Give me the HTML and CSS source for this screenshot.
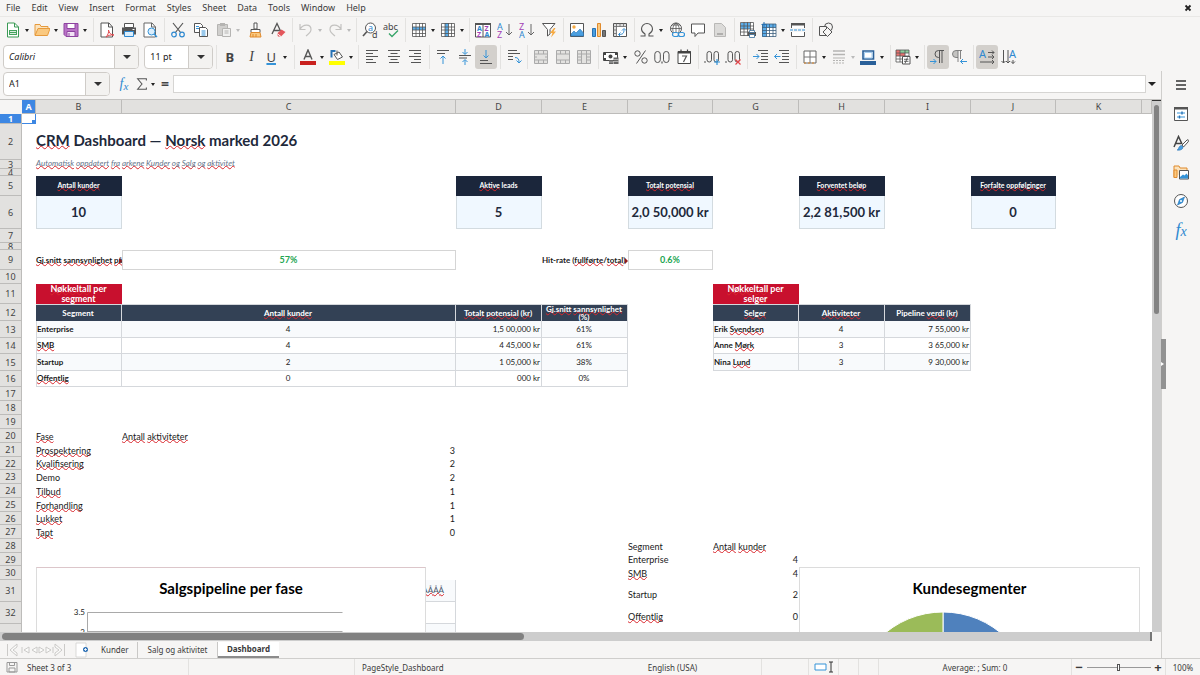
FILE: index.html
```html
<!DOCTYPE html>
<html lang="en">
<head>
<meta charset="utf-8">
<title>CRM Dashboard</title>
<link rel="stylesheet" href="styles.css">
</head>
<body>
<svg class="defs" aria-hidden="true">
  <symbol id="new" viewBox="0 0 16 16"><path d="M2.5 1h7l4 4v10h-11z" fill="#fff" stroke="#3a9a55"/><path d="M9.500 1v4h4" fill="none" stroke="#3a9a55"/><path d="M4 8h8v5H4z" fill="#43a35c"/><path d="M5 9.500h6M5 11.500h6" stroke="#fff" stroke-width=".8"/></symbol>
  <symbol id="open" viewBox="0 0 16 16"><path d="M1 13V2.500h5l1 2h7v3" fill="#fbe3bd" stroke="#e69a3c"/><path d="M1 13.500L4 6.500h12l-2.500 7z" fill="#fac980" stroke="#e69a3c"/></symbol>
  <symbol id="save" viewBox="0 0 16 16"><path d="M1 1.500h14v13H3l-2-2z" fill="#b973c6" stroke="#8e44a0"/><path d="M4 1.500h8v5H4z" fill="#fff" stroke="#8e44a0"/><path d="M4 9.500h8v5H4z" fill="#f3e3f6" stroke="#8e44a0"/><path d="M6 11v3" stroke="#8e44a0"/></symbol>
  <symbol id="pdf" viewBox="0 0 16 16"><path d="M2 1h8l3.500 4v10H2z" fill="#fff" stroke="#555"/><path d="M9.500 1v4h4" fill="none" stroke="#555"/><path d="M7 15c2-2 3-5 2.500-7 .5 3 2.500 5 5.500 5-3-.5-6 .5-8 2z" fill="none" stroke="#e0474c"/></symbol>
  <symbol id="print" viewBox="0 0 16 16"><path d="M3.500 1.500h9v4h-9z" fill="#fff" stroke="#555"/><path d="M1 5.500h14v7H1z" fill="#555"/><path d="M3.500 9.500h9v5h-9z" fill="#dbeefc" stroke="#2f89d0"/><path d="M11.500 7.500h2" stroke="#fff"/></symbol>
  <symbol id="preview" viewBox="0 0 16 16"><path d="M2 1h8l3.500 4v10H2z" fill="#fff" stroke="#666"/><path d="M9.500 1v4h4" fill="none" stroke="#666"/><circle cx="9.500" cy="9.500" r="3.500" fill="#dbeefc" stroke="#3493d8"/><path d="M12 12l3 3" stroke="#3493d8" stroke-width="1.400"/></symbol>
  <symbol id="cut" viewBox="0 0 16 16"><path d="M3 1l8 10M13 1L5 11" stroke="#555" stroke-width="1.200"/><circle cx="4" cy="12.500" r="2.300" fill="none" stroke="#2f89d0" stroke-width="1.200"/><circle cx="12" cy="12.500" r="2.300" fill="none" stroke="#2f89d0" stroke-width="1.200"/></symbol>
  <symbol id="copy" viewBox="0 0 16 16"><path d="M1.500 1.500h6l2 2v7h-8z" fill="#fff" stroke="#555"/><path d="M6.500 5.500h6l2 2v7h-8z" fill="#fff" stroke="#555"/><path d="M3 4.500h3M3 6.500h3M8.500 9h4M8.500 11h4M8.500 13h4" stroke="#3493d8"/></symbol>
  <symbol id="paste" viewBox="0 0 16 16"><path d="M1.500 2.500h10v11h-10z" fill="#d0cfcd" stroke="#b5b4b2"/><path d="M4 1h5v3H4z" fill="#b5b4b2"/><path d="M6.500 6.500h8v8h-8z" fill="#f1f1f0" stroke="#b5b4b2"/><path d="M8.500 9h4M8.500 11h4" stroke="#b5b4b2"/></symbol>
  <symbol id="clone" viewBox="0 0 16 16"><path d="M7 1h3v6H7z" fill="#fff" stroke="#555"/><path d="M4 7.500h9v3H4z" fill="#fff" stroke="#555"/><path d="M4 10.500h9l1 4.500H3z" fill="#fac980" stroke="#e08a2c"/><path d="M6 12v3M9 12v3" stroke="#e08a2c"/></symbol>
  <symbol id="clear" viewBox="0 0 16 16"><path d="M2 12L7 1.500 11 10M3.500 8.500h6" fill="none" stroke="#555" stroke-width="1.300"/><path d="M7 11.500l4.500-4 4 2.500-4.500 4.500H8z" fill="#e4575c"/><path d="M7 11.500l4 3" stroke="#fff"/></symbol>
  <symbol id="undo" viewBox="0 0 16 16"><path d="M2 2v5.500h5.500M2 7.500C5 1.500 13 2 13 7.500c0 3-2.500 4.500-5 6.500" fill="none" stroke="#c3c2c0" stroke-width="1.200"/></symbol>
  <symbol id="redo" viewBox="0 0 16 16"><path d="M14 2v5.500H8.500M14 7.500C11 1.500 3 2 3 7.500c0 3 2.500 4.500 5 6.500" fill="none" stroke="#c3c2c0" stroke-width="1.200"/></symbol>
  <symbol id="find" viewBox="0 0 16 16"><circle cx="8.500" cy="6" r="5" fill="#fff" stroke="#555"/><path d="M5 9.500L1 14" stroke="#555" stroke-width="1.600"/><text x="6" y="8.500" class="it blue">a</text><text x="10" y="15.500" class="it">d</text></symbol>
  <symbol id="spell" viewBox="0 0 16 16"><text x="0" y="7.500" class="it">abc</text><path d="M6 11.500l3 3 6-6" fill="none" stroke="#3aa66a" stroke-width="1.400"/></symbol>
  <symbol id="row" viewBox="0 0 16 16"><path d="M1.500 1.500h13v13h-13z" fill="#fff"/><path d="M1 5h14v3H1z" fill="#5badea"/><path d="M1.500 1.500h13v13h-13zM1 5h14M1 8h14M1 11.500h14M5 1v14M8.500 1v14M11.500 1v14" fill="none" stroke="#555" stroke-width=".8"/></symbol>
  <symbol id="col" viewBox="0 0 16 16"><path d="M1.500 1.500h13v13h-13z" fill="#fff"/><path d="M5 1h3.500v14H5z" fill="#5badea"/><path d="M1.500 1.500h13v13h-13zM1 5h14M1 8h14M1 11.500h14M5 1v14M8.500 1v14M11.500 1v14" fill="none" stroke="#555" stroke-width=".8"/></symbol>
  <symbol id="sort" viewBox="0 0 16 16"><path d="M.5 1.500h15v13.500H.5z" fill="#fff" stroke="#555"/><path d="M0 1h16v2H0z" fill="#555"/><path d="M8 2v13" stroke="#555"/><text x="2" y="9" class="is blue">A</text><text x="2" y="14.500" class="is violet">Z</text><text x="9.500" y="9" class="is violet">Z</text><text x="9.500" y="14.500" class="is blue">A</text></symbol>
  <symbol id="asc" viewBox="0 0 16 16"><text x="0" y="7.500" class="it blue">A</text><text x="0" y="15.500" class="it violet">Z</text><path d="M12 2v11M9 10l3 3 3-3" fill="none" stroke="#666"/></symbol>
  <symbol id="desc" viewBox="0 0 16 16"><text x="0" y="7.500" class="it violet">Z</text><text x="0" y="15.500" class="it blue">A</text><path d="M12 2v11M9 10l3 3 3-3" fill="none" stroke="#666"/></symbol>
  <symbol id="filter" viewBox="0 0 16 16"><path d="M1.500 1.500h12.500L9 7.500v4.500l-2.500 2V7.500z" fill="#fff" stroke="#555"/><path d="M13 6l-4 5h2.500L10 15.500l5-6h-2.500L14.500 6z" fill="#f7a93f"/></symbol>
  <symbol id="image" viewBox="0 0 16 16"><path d="M1.500 1.500h13v13h-13z" fill="#fff" stroke="#555"/><circle cx="5" cy="5" r="1.700" fill="#f7a93f"/><path d="M2 14v-2l3-3 2 2 4-4 3.500 4v3z" fill="#4b9fe0" stroke="#2772b5" stroke-width=".6"/></symbol>
  <symbol id="chart" viewBox="0 0 16 16"><path d="M1.500 6.500h3v8h-3z" fill="#4b9fe0" stroke="#2772b5"/><path d="M6.500 1.500h3v13h-3z" fill="#fac980" stroke="#e08a2c"/><path d="M11.500 8.500h3v6h-3z" fill="#777" stroke="#555"/></symbol>
  <symbol id="pivot" viewBox="0 0 16 16"><path d="M1.500 1.500h13v13h-13z" fill="#fff" stroke="#555"/><path d="M2 2h12v2.500H2zM2 2h2.500v12H2z" fill="#ddd"/><path d="M1 4.500h14M4.500 1v14M8 1v3.500M11.500 1v3.500M1 8h3.500M1 11.500h3.500" stroke="#666" stroke-width=".8"/><path d="M7 12.500c4 0 5-1.500 5-5M10 8.500l2-2 2 2M8.500 10.500l-2 2 2 2" fill="none" stroke="#2f89d0"/></symbol>
  <symbol id="omega" viewBox="0 0 16 16"><path d="M1.500 14h4.500v-2C3.500 10.500 2.500 9 2.500 7a5.500 5.500 0 0 1 11 0c0 2-1 3.500-3.500 5v2h4.500" fill="none" stroke="#555" stroke-width="1.100"/></symbol>
  <symbol id="link" viewBox="0 0 16 16"><circle cx="7" cy="6.500" r="5.500" fill="#fff" stroke="#555"/><path d="M1.500 6.500h11M7 1v11M3 3h8M4.500 11C3 7 4 3 7 1c3 2 4 6 2.500 10" fill="none" stroke="#555" stroke-width=".8"/><rect x="3.500" y="10.500" width="6" height="4" rx="2" fill="#f6f5f4" stroke="#3493d8" stroke-width="1.200"/><rect x="9.500" y="10.500" width="6" height="4" rx="2" fill="#f6f5f4" stroke="#3493d8" stroke-width="1.200"/></symbol>
  <symbol id="comment" viewBox="0 0 16 16"><path d="M1.500 2h13v9H8l-3 3.500V11H1.500z" fill="#fff" stroke="#555"/></symbol>
  <symbol id="footer" viewBox="0 0 16 16"><path d="M2.500 1.500h7l4 4v9h-11z" fill="#dcdbd9" stroke="#b9b8b6"/><path d="M5 11h6v2H5z" fill="#b0afad"/></symbol>
  <symbol id="area" viewBox="0 0 16 16"><path d="M.5 .5h13v13H.5z" fill="#fff"/><path d="M1 1h9v6H1z" fill="#5badea"/><path d="M.5 .5h13v13H.5zM0 4h14M0 7h14M0 10h14M4 0v14M7.500 0v14M10.500 0v14" fill="none" stroke="#555" stroke-width=".8"/><path d="M8 10h8v4H8z" fill="#555"/><path d="M9.500 8.500h5v2h-5zM9.500 12.500h5v3h-5z" fill="#fff" stroke="#3a6f9a" stroke-width=".8"/></symbol>
  <symbol id="freeze" viewBox="0 0 16 16"><path d="M3 2h12v12.500H3z" fill="#fff"/><path d="M1 2h14v3.500H1zM1 2h4.500v13H1z" fill="#5badea"/><path d="M1.500 2h13.500v12.500H1.500zM1 5.500h14M1 8.500h14M1 11.500h14M5.500 2v13M8.500 2v13M12 2v13" fill="none" stroke="#3d5f7d" stroke-width=".8"/><path d="M3 0v5M.5 2.500h5" stroke="#2772b5"/></symbol>
  <symbol id="split" viewBox="0 0 16 16"><path d="M1.500 6V1.500h13V6M1.500 10v4.500h13V10" fill="#fff" stroke="#555"/><path d="M1 1h14v2.500H1z" fill="#555"/><path d="M0 8h16" stroke="#3493d8" stroke-dasharray="3 1"/></symbol>
  <symbol id="shapes" viewBox="0 0 16 16"><circle cx="10.500" cy="5" r="4" fill="#f6f5f4" stroke="#555"/><path d="M1.500 4.500h7v9h-7z" fill="#f6f5f4" stroke="#555"/><path d="M9.500 5.500l4.500 4.500-4.500 4.500L5 10z" fill="#f6f5f4" stroke="#555"/></symbol>
  <symbol id="al" viewBox="0 0 16 16"><path d="M2 1.500h12M2 4.500h7M2 7.500h12M2 10.500h7M2 13.500h10" stroke="#555"/></symbol>
  <symbol id="ac" viewBox="0 0 16 16"><path d="M2 1.500h12M4.500 4.500h7M2 7.500h12M4.500 10.500h7M3 13.500h10" stroke="#555"/></symbol>
  <symbol id="ar" viewBox="0 0 16 16"><path d="M2 1.500h12M7 4.500h7M2 7.500h12M7 10.500h7M4 13.500h10" stroke="#555"/></symbol>
  <symbol id="vt" viewBox="0 0 16 16"><path d="M2 1.500h12M2 4.500h8" stroke="#555"/><path d="M8 15V7M5.500 9.500L8 7l2.500 2.500" fill="none" stroke="#3493d8"/></symbol>
  <symbol id="vm" viewBox="0 0 16 16"><path d="M2 6.500h12M2 9h8" stroke="#555"/><path d="M8 0v5M5.500 3L8 5.500 10.500 3M8 16v-5M5.500 13L8 10.500l2.500 2.500" fill="none" stroke="#3493d8"/></symbol>
  <symbol id="vb" viewBox="0 0 16 16"><path d="M2 11.500h8M2 14.500h12" stroke="#555"/><path d="M8 1v8M5.500 6.500L8 9l2.500-2.500" fill="none" stroke="#3493d8"/></symbol>
  <symbol id="wrap" viewBox="0 0 16 16"><path d="M2 1.500h9M2 4.500h12M2 7.500h5M2 10.500h5" stroke="#555"/><path d="M9 8.500c3 0 4 1.500 4 5M10.500 11.500l2.500 2.500 2.500-2.500" fill="none" stroke="#3493d8"/></symbol>
  <symbol id="m1" viewBox="0 0 16 16"><path d="M1.500 1.500h13v13h-13z" fill="#e3e2e0"/><path d="M1.500 1.500h13v13h-13zM1 5h14M1 11h14M5.500 1v4M10.500 1v4M5.500 11v4M10.500 11v4M1 8h3M12 8h3" fill="none" stroke="#aaa"/></symbol>
  <symbol id="m2" viewBox="0 0 16 16"><path d="M1.500 1.500h13v13h-13z" fill="#e3e2e0"/><path d="M1.500 1.500h13v13h-13zM1 5h14M1 11h14M5.500 1v4M10.500 1v4M5.500 11v4M10.500 11v4" fill="none" stroke="#aaa"/></symbol>
  <symbol id="m3" viewBox="0 0 16 16"><path d="M1.500 1.500h13v13h-13z" fill="#e3e2e0"/><path d="M1.500 1.500h13v13h-13zM1 5h14M1 11h4.500M10.500 11H15M5.500 1v14M10.500 1v14M1 8h4.500M10.500 8H15" fill="none" stroke="#aaa"/></symbol>
  <symbol id="money" viewBox="0 0 16 16"><path d="M.5 3.500h14v8H.5z" fill="#fff" stroke="#444"/><circle cx="7.500" cy="7.500" r="2" fill="#444"/><path d="M1 4h2v2H1zM12 4h2v2h-2zM1 9h2v2H1z" fill="#444"/><path d="M6 11h4v4H6zM10.500 8.500h5v6.500h-5z" fill="#666"/><path d="M6 13h4M10.500 10.500h5M10.500 12.500h5" stroke="#ddd" stroke-width=".6"/></symbol>
  <symbol id="pct" viewBox="0 0 16 16"><circle cx="4.500" cy="4.500" r="2.700" fill="none" stroke="#555"/><circle cx="11.500" cy="11.500" r="2.700" fill="none" stroke="#555"/><path d="M12.500 1.500L3.500 14.500" stroke="#555"/></symbol>
  <symbol id="num" viewBox="0 0 16 16"><rect x=".8" y="2.500" width="5.500" height="11" rx="2.700" fill="none" stroke="#555"/><rect x="9.500" y="2.500" width="5.500" height="11" rx="2.700" fill="none" stroke="#555"/><path d="M8 12.500v2" stroke="#555" stroke-width="1.200"/></symbol>
  <symbol id="date" viewBox="0 0 16 16"><path d="M2 2.500h12.500v12H2z" fill="#fff" stroke="#444"/><path d="M2 2h12.500v2.500H2z" fill="#444"/><path d="M5 .5v3M11.500 .5v3" stroke="#444" stroke-width="1.200"/><path d="M6 7h4.500L7.500 13" fill="none" stroke="#555" stroke-width="1.200"/></symbol>
  <symbol id="addd" viewBox="0 0 16 16"><path d="M1 12v2" stroke="#555"/><rect x="3" y="2.500" width="4.500" height="10.500" rx="2.200" fill="none" stroke="#555"/><rect x="10" y="2.500" width="4.500" height="10.500" rx="2.200" fill="none" stroke="#555"/><path d="M13 10v6M10 13h6" stroke="#3493d8" stroke-width="1.200"/></symbol>
  <symbol id="deld" viewBox="0 0 16 16"><path d="M1 12v2" stroke="#555"/><rect x="3" y="2.500" width="4.500" height="10.500" rx="2.200" fill="none" stroke="#555"/><rect x="10" y="2.500" width="4.500" height="10.500" rx="2.200" fill="none" stroke="#555"/><path d="M10.500 10.500l5 5M15.500 10.500l-5 5" stroke="#e4474c" stroke-width="1.200"/></symbol>
  <symbol id="ind" viewBox="0 0 16 16"><path d="M5 1.500h10M8 4.500h7M8 7.500h7M8 10.500h7M5 13.500h10" stroke="#555"/><path d="M0 7.500h6M3.500 5L6 7.500 3.500 10" fill="none" stroke="#3493d8"/></symbol>
  <symbol id="outd" viewBox="0 0 16 16"><path d="M5 1.500h10M8 4.500h7M8 7.500h7M8 10.500h7M5 13.500h10" stroke="#555"/><path d="M6.500 7.500h-6M3 5L.5 7.500 3 10" fill="none" stroke="#3493d8"/></symbol>
  <symbol id="bord" viewBox="0 0 16 16"><path d="M2 2h12v12H2z" fill="#fff" stroke="#666"/><path d="M8 2v12M2 8h12" stroke="#777"/><path d="M2 14h12" stroke="#e08a2c" stroke-dasharray="2 2"/></symbol>
  <symbol id="lines" viewBox="0 0 16 16"><path d="M2 2h12M2 5.500h12" stroke="#b5b4b2" stroke-width="1.600"/><path d="M2 9h12" stroke="#b5b4b2"/><path d="M2 11.500h12M2 14h12" stroke="#b5b4b2" stroke-dasharray="2 1"/></symbol>
  <symbol id="lcol" viewBox="0 0 16 16"><path d="M3 2h10.500v8H3z" fill="#fff" stroke="#2a6099" stroke-width="1.600"/><path d="M4.500 3.500h7.500v5.500H4.500z" fill="none" stroke="#8fc0ea" stroke-width=".8"/><path d="M0 12h16v4H0z" fill="#2a6099"/></symbol>
  <symbol id="cond" viewBox="0 0 16 16"><path d="M1 1h13v12H1z" fill="#fff"/><path d="M1 1h4v6H1z" fill="#e9726f"/><path d="M5 1h9v3H5z" fill="#8ccf9d"/><path d="M5 4h5v3H5z" fill="#e9726f"/><path d="M1 1h13v12H1zM1 4h13M1 7h13M1 10h13M5 1v12M10 1v12" fill="none" stroke="#555" stroke-width=".8"/><path d="M7.500 7.500h7.500v7.500H7.500z" fill="#fff" stroke="#555"/><path d="M9 10.300h4.500M9 12.300h4.500M12.500 8.500l-2.500 6" stroke="#444" stroke-width=".8"/></symbol>
  <symbol id="ltr" viewBox="0 0 16 16"><path d="M14 1.500H8.500a3.500 3.500 0 0 0 0 7h1M9.500 1.500V14M12 1.500V14" fill="none" stroke="#555"/><path d="M0 12.500h6M3.500 10L6 12.500 3.500 15" fill="none" stroke="#3493d8"/></symbol>
  <symbol id="rtl" viewBox="0 0 16 16"><path d="M7 1.500H5a3.500 3.500 0 0 0 0 7h2z" fill="#c4c3c1"/><path d="M11 1.500H5a3.500 3.500 0 0 0 0 7h2M7 1.500V13M9.500 1.500V10" fill="none" stroke="#777" stroke-width=".9"/><path d="M9.500 12.500H16M12 10l-2.500 2.500L12 15" fill="none" stroke="#3493d8"/></symbol>
  <symbol id="th" viewBox="0 0 16 16"><text x="0" y="9" class="ib blue">A</text><path d="M9 3.500h6M9 8h6M1 13h14M13 1.500l2 2-2 2M13 6l2 2-2 2M13 11l2 2-2 2" fill="none" stroke="#555"/></symbol>
  <symbol id="tv" viewBox="0 0 16 16"><text x="8" y="9" class="ib blue">A</text><path d="M2.500 1v13M7 1v13M12 11v3.500M.5 12l2 2 2-2M5 12l2 2 2-2M10 12.500l2 2 2-2" fill="none" stroke="#555"/></symbol>
  <symbol id="fill" viewBox="0 0 16 16"><path d="M2.500 8.500V2h4" fill="none" stroke="#2772b5" stroke-width="2"/><path d="M5 5.500l5-2.500 3.500 5L8.500 10.500z" fill="#fff" stroke="#555"/><path d="M8 6.500V1.500" stroke="#555"/><path d="M0 12h16v4H0z" fill="#ff0"/></symbol>
  <symbol id="fcol" viewBox="0 0 16 16"><path d="M4 10.500L8 1l4 9.500M5.500 7.500h5" fill="none" stroke="#555" stroke-width="1.400"/><path d="M0 12h16v4H0z" fill="#c9211e"/></symbol>
  <symbol id="props" viewBox="0 0 16 16"><path d="M1.500 1.500h13v13h-13z" fill="#fff" stroke="#555"/><path d="M1 1h14v2.500H1z" fill="#555"/><path d="M4 7h8M4 11h8" stroke="#3493d8"/><path d="M9 5.500v3M6.500 9.500v3" stroke="#2772b5" stroke-width="1.400"/></symbol>
  <symbol id="styles" viewBox="0 0 16 16"><path d="M1 12L5.500 1.500 9 9M2.500 8.500h6" fill="none" stroke="#444" stroke-width="1.500"/><path d="M9 10l5-5c2-1 2 1 1 2l-4.500 5z" fill="#fff" stroke="#555"/><path d="M4 15c2 0 1-4 4.500-4.500L10 12c0 3-4 3.500-6 3z" fill="#4b9fe0" stroke="#2772b5" stroke-width=".6"/></symbol>
  <symbol id="gallery" viewBox="0 0 16 16"><path d="M1 13.500V2h5l1 2h7v2" fill="#fbe3bd" stroke="#e08a2c"/><path d="M1 13.500V6h3v7.500z" fill="#fac980" stroke="#e08a2c"/><path d="M6.500 6.500h9v8.500h-9z" fill="#fff" stroke="#555"/><path d="M7 14.500V13l3-2.500 1.500 1 2-2 1.500 2v3z" fill="#3493d8"/></symbol>
  <symbol id="nav" viewBox="0 0 16 16"><circle cx="8" cy="8" r="6.500" fill="#fff" stroke="#555"/><path d="M11.500 4L9.500 9.500 4.500 12l2-5.500z" fill="#3493d8" stroke="#2772b5" stroke-width=".6"/><circle cx="8" cy="8" r="1" fill="#fff"/></symbol>
</svg>

<nav class="menubar">
  <button>File</button><button>Edit</button><button>View</button><button>Insert</button><button>Format</button><button>Styles</button><button>Sheet</button><button>Data</button><button>Tools</button><button>Window</button><button>Help</button>
  <button class="close" aria-label="Close document"><svg viewBox="0 0 8 8"><path d="M1.500 1.500l5 5M6.500 1.500l-5 5" stroke="#222" stroke-width="1.800"/></svg></button>
</nav>

<div class="toolbar" role="toolbar" aria-label="Standard">
  <div class="group w94">
    <button class="tb drop" aria-label="New"><svg><use href="#new"/></svg></button><button class="tb drop" aria-label="Open"><svg><use href="#open"/></svg></button><button class="tb drop" aria-label="Save"><svg><use href="#save"/></svg></button>
  </div>
  <div class="group w71">
    <button class="tb" aria-label="Export as PDF"><svg><use href="#pdf"/></svg></button><button class="tb" aria-label="Print"><svg><use href="#print"/></svg></button><button class="tb" aria-label="Print preview"><svg><use href="#preview"/></svg></button>
  </div>
  <div class="group w128">
    <button class="tb" aria-label="Cut"><svg><use href="#cut"/></svg></button><button class="tb" aria-label="Copy"><svg><use href="#copy"/></svg></button><button class="tb drop dim" aria-label="Paste"><svg><use href="#paste"/></svg></button><button class="tb" aria-label="Clone formatting"><svg><use href="#clone"/></svg></button><button class="tb" aria-label="Clear formatting"><svg><use href="#clear"/></svg></button>
  </div>
  <div class="group w64">
    <button class="tb drop dim" aria-label="Undo"><svg><use href="#undo"/></svg></button><button class="tb drop dim" aria-label="Redo"><svg><use href="#redo"/></svg></button>
  </div>
  <div class="group w49">
    <button class="tb" aria-label="Find and replace"><svg><use href="#find"/></svg></button><button class="tb" aria-label="Spelling"><svg><use href="#spell"/></svg></button>
  </div>
  <div class="group w64">
    <button class="tb drop" aria-label="Row"><svg><use href="#row"/></svg></button><button class="tb drop" aria-label="Column"><svg><use href="#col"/></svg></button>
  </div>
  <div class="group w94">
    <button class="tb" aria-label="Sort"><svg><use href="#sort"/></svg></button><button class="tb" aria-label="Sort ascending"><svg><use href="#asc"/></svg></button><button class="tb" aria-label="Sort descending"><svg><use href="#desc"/></svg></button><button class="tb" aria-label="AutoFilter"><svg><use href="#filter"/></svg></button>
  </div>
  <div class="group w71">
    <button class="tb" aria-label="Image"><svg><use href="#image"/></svg></button><button class="tb" aria-label="Chart"><svg><use href="#chart"/></svg></button><button class="tb" aria-label="Pivot table"><svg><use href="#pivot"/></svg></button>
  </div>
  <div class="group w100">
    <button class="tb drop" aria-label="Special character"><svg><use href="#omega"/></svg></button><button class="tb" aria-label="Hyperlink"><svg><use href="#link"/></svg></button><button class="tb" aria-label="Comment"><svg><use href="#comment"/></svg></button><button class="tb" aria-label="Headers and footers"><svg><use href="#footer"/></svg></button>
  </div>
  <div class="group w78">
    <button class="tb" aria-label="Print area"><svg><use href="#area"/></svg></button><button class="tb drop" aria-label="Freeze rows and columns"><svg><use href="#freeze"/></svg></button><button class="tb" aria-label="Split window"><svg><use href="#split"/></svg></button>
  </div>
  <div class="group w27 last">
    <button class="tb" aria-label="Draw functions"><svg><use href="#shapes"/></svg></button>
  </div>
</div>

<div class="toolbar" role="toolbar" aria-label="Formatting">
  <div class="group boxes">
    <div class="combo fontname"><input value="Calibri" aria-label="Font name"><button aria-label="Show fonts"></button></div>
    <div class="combo fontsize"><input value="11 pt" aria-label="Font size"><button aria-label="Show sizes"></button></div>
  </div>
  <div class="group w78">
    <button class="tb letter"><b>B</b></button><button class="tb letter"><i>I</i></button><button class="tb drop letter"><u>U</u></button>
  </div>
  <div class="group w64">
    <button class="tb drop" aria-label="Font color"><svg><use href="#fcol"/></svg></button><button class="tb drop" aria-label="Background color"><svg><use href="#fill"/></svg></button>
  </div>
  <div class="group w71">
    <button class="tb" aria-label="Align left"><svg><use href="#al"/></svg></button><button class="tb" aria-label="Center"><svg><use href="#ac"/></svg></button><button class="tb" aria-label="Align right"><svg><use href="#ar"/></svg></button>
  </div>
  <div class="group w71">
    <button class="tb" aria-label="Align top"><svg><use href="#vt"/></svg></button><button class="tb" aria-label="Center vertically"><svg><use href="#vm"/></svg></button><button class="tb on" aria-label="Align bottom"><svg><use href="#vb"/></svg></button>
  </div>
  <div class="group w27">
    <button class="tb" aria-label="Wrap text"><svg><use href="#wrap"/></svg></button>
  </div>
  <div class="group w71">
    <button class="tb" aria-label="Merge and center"><svg><use href="#m1"/></svg></button><button class="tb" aria-label="Merge cells"><svg><use href="#m2"/></svg></button><button class="tb" aria-label="Unmerge cells"><svg><use href="#m3"/></svg></button>
  </div>
  <div class="group w100">
    <button class="tb drop" aria-label="Currency"><svg><use href="#money"/></svg></button><button class="tb" aria-label="Percent"><svg><use href="#pct"/></svg></button><button class="tb" aria-label="Number"><svg><use href="#num"/></svg></button><button class="tb" aria-label="Date"><svg><use href="#date"/></svg></button>
  </div>
  <div class="group w49">
    <button class="tb" aria-label="Add decimal place"><svg><use href="#addd"/></svg></button><button class="tb" aria-label="Delete decimal place"><svg><use href="#deld"/></svg></button>
  </div>
  <div class="group w49">
    <button class="tb" aria-label="Increase indent"><svg><use href="#ind"/></svg></button><button class="tb" aria-label="Decrease indent"><svg><use href="#outd"/></svg></button>
  </div>
  <div class="group w94">
    <button class="tb drop" aria-label="Borders"><svg><use href="#bord"/></svg></button><button class="tb drop dim" aria-label="Border style"><svg><use href="#lines"/></svg></button><button class="tb drop" aria-label="Border color"><svg><use href="#lcol"/></svg></button>
  </div>
  <div class="group w34">
    <button class="tb drop" aria-label="Conditional formatting"><svg><use href="#cond"/></svg></button>
  </div>
  <div class="group w49">
    <button class="tb on" aria-label="Left to right"><svg><use href="#ltr"/></svg></button><button class="tb" aria-label="Right to left"><svg><use href="#rtl"/></svg></button>
  </div>
  <div class="group w49 last">
    <button class="tb on" aria-label="Text direction horizontal"><svg><use href="#th"/></svg></button><button class="tb" aria-label="Text direction vertical"><svg><use href="#tv"/></svg></button>
  </div>
</div>

<div class="workspace">
  <main class="doc">
    <div class="formulabar">
      <div class="combo cellname"><input value="A1" aria-label="Name box"><button aria-label="Show names"></button></div>
      <button class="fx" aria-label="Function wizard"><i>f</i><i class="sub">x</i></button>
      <button class="tb drop sum" aria-label="Sum"><svg viewBox="0 0 16 16"><path d="M13 4V2H3l5 6-5 6h10v-2" fill="none" stroke="#555" stroke-width="1.200"/></svg></button>
      <button class="equals" aria-label="Formula">=</button>
      <input class="formula" aria-label="Formula input">
      <button class="expand" aria-label="Expand formula bar"></button>
    </div>
    <div class="view">
      <div class="sheet">
        <table>
          <colgroup><col class="c-num"><col class="c-a"><col class="c-std"><col class="c-wide"><col class="c-std"><col class="c-std"><col class="c-alt"><col class="c-std"><col class="c-std"><col class="c-std"><col class="c-alt"><col class="c-std"><col></colgroup>
          <thead><tr class="h14"><td class="corner"></td><th class="sel">A</th><th>B</th><th>C</th><th>D</th><th>E</th><th>F</th><th>G</th><th>H</th><th>I</th><th>J</th><th>K</th><th></th></tr></thead>
          <tbody>
          <tr class="h10"><th class="sel">1</th><td class="cursor"></td><td colspan="11"></td></tr>
          <tr class="h36"><th>2</th><td></td><td colspan="4" class="title"><s>CRM</s> Dashboard — <s>Norsk</s> marked 2026</td><td colspan="7"></td></tr>
          <tr class="h9"><th>3</th><td></td><td colspan="4" class="subtitle"><s>Automatisk</s> <s>oppdatert</s> <s>fra</s> <s>arkene</s> <s>Kunder</s> <s>og</s> <s>Salg</s> <s>og</s> <s>aktivitet</s></td><td colspan="7"></td></tr>
          <tr class="h7"><th>4</th><td colspan="12"></td></tr>
          <tr class="h20"><th>5</th><td></td><td class="kh"><s>Antall</s> <s>kunder</s></td><td></td><td class="kh"><s>Aktive</s> leads</td><td></td><td class="kh"><s>Totalt</s> <s>potensial</s></td><td></td><td class="kh"><s>Forventet</s> <s>beløp</s></td><td></td><td class="kh"><s>Forfalte</s> <s>oppfølginger</s></td><td colspan="2"></td></tr>
          <tr class="h33"><th>6</th><td></td><td class="kv">10</td><td></td><td class="kv">5</td><td></td><td class="kv">2,0 50,000 kr</td><td></td><td class="kv">2,2 81,500 kr</td><td></td><td class="kv">0</td><td colspan="2"></td></tr>
          <tr class="h14"><th>7</th><td colspan="12"></td></tr>
          <tr class="h7"><th>8</th><td colspan="12"></td></tr>
          <tr class="h20"><th>9</th><td></td><td class="cut"><s>Gj.snitt</s> <s>sannsynlighet</s> <s>på</s></td><td class="rate">57%</td><td></td><td class="cut">Hit-rate (<s>fullførte</s>/<s>total</s>)</td><td class="rate">0.6%</td><td colspan="6"></td></tr>
          <tr class="h14"><th>10</th><td colspan="12"></td></tr>
          <tr class="h20"><th>11</th><td></td><td class="red"><s>Nøkkeltall</s> per<br>segment</td><td colspan="4"></td><td class="red"><s>Nøkkeltall</s> per<br><s>selger</s></td><td colspan="5"></td></tr>
          <tr class="h17"><th>12</th><td></td><td class="dh">Segment</td><td class="dh"><s>Antall</s> <s>kunder</s></td><td class="dh"><s>Totalt</s> <s>potensial</s> (<s>kr</s>)</td><td class="dh"><s>Gj.snitt</s> <s>sannsynlighet</s> (%)</td><td></td><td class="dh"><s>Selger</s></td><td class="dh"><s>Aktiviteter</s></td><td class="dh">Pipeline <s>verdi</s> (<s>kr</s>)</td><td colspan="3"></td></tr>
          <tr class="h17 odd"><th>13</th><td></td><td class="d n">Enterprise</td><td class="d c">4</td><td class="d r">1,5 00,000 kr</td><td class="d c">61%</td><td></td><td class="d n">Erik <s>Svendsen</s></td><td class="d c">4</td><td class="d r">7 55,000 kr</td><td colspan="3"></td></tr>
          <tr class="h16"><th>14</th><td></td><td class="d n"><s>SMB</s></td><td class="d c">4</td><td class="d r">4 45,000 kr</td><td class="d c">61%</td><td></td><td class="d n">Anne <s>Mørk</s></td><td class="d c">3</td><td class="d r">3 65,000 kr</td><td colspan="3"></td></tr>
          <tr class="h17 odd"><th>15</th><td></td><td class="d n">Startup</td><td class="d c">2</td><td class="d r">1 05,000 kr</td><td class="d c">38%</td><td></td><td class="d n">Nina <s>Lund</s></td><td class="d c">3</td><td class="d r">9 30,000 kr</td><td colspan="3"></td></tr>
          <tr class="h16"><th>16</th><td></td><td class="d n"><s>Offentlig</s></td><td class="d c">0</td><td class="d r">000 kr</td><td class="d c">0%</td><td colspan="7"></td></tr>
          <tr class="h14"><th>17</th><td colspan="12"></td></tr>
          <tr class="h14"><th>18</th><td colspan="12"></td></tr>
          <tr class="h14"><th>19</th><td colspan="12"></td></tr>
          <tr class="h14"><th>20</th><td></td><td><s>Fase</s></td><td><s>Antall</s> <s>aktiviteter</s></td><td colspan="9"></td></tr>
          <tr class="h14"><th>21</th><td></td><td><s>Prospektering</s></td><td class="r">3</td><td colspan="9"></td></tr>
          <tr class="h13"><th>22</th><td></td><td><s>Kvalifisering</s></td><td class="r">2</td><td colspan="9"></td></tr>
          <tr class="h14"><th>23</th><td></td><td>Demo</td><td class="r">2</td><td colspan="9"></td></tr>
          <tr class="h14"><th>24</th><td></td><td><s>Tilbud</s></td><td class="r">1</td><td colspan="9"></td></tr>
          <tr class="h14"><th>25</th><td></td><td><s>Forhandling</s></td><td class="r">1</td><td colspan="9"></td></tr>
          <tr class="h13"><th>26</th><td></td><td><s>Lukket</s></td><td class="r">1</td><td colspan="9"></td></tr>
          <tr class="h14"><th>27</th><td></td><td><s>Tapt</s></td><td class="r">0</td><td colspan="9"></td></tr>
          <tr class="h14"><th>28</th><td colspan="5"></td><td>Segment</td><td><s>Antall</s> <s>kunder</s></td><td colspan="5"></td></tr>
          <tr class="h13"><th>29</th><td colspan="5"></td><td>Enterprise</td><td class="r">4</td><td colspan="5"></td></tr>
          <tr class="h14"><th>30</th><td colspan="5"></td><td><s>SMB</s></td><td class="r">4</td><td colspan="5"></td></tr>
          <tr class="h22 odd"><th>31</th><td></td><td class="d"></td><td class="d r behind"><s>ÅÅÅÅÅÅ</s></td><td colspan="2"></td><td class="low">Startup</td><td class="r low">2</td><td colspan="5"></td></tr>
          <tr class="h22"><th>32</th><td></td><td class="d"></td><td class="d"></td><td colspan="2"></td><td class="low"><s>Offentlig</s></td><td class="r low">0</td><td colspan="5"></td></tr>
          <tr class="h22 odd"><th></th><td></td><td class="d"></td><td class="d"></td><td colspan="9"></td></tr>
          </tbody>
        </table>
        <figure class="figure pipeline">
          <figcaption>Salgspipeline per fase</figcaption>
          <svg viewBox="0 0 388 60" width="388" height="60"><path d="M50.500 60V8.500h255M50.500 27.500h255" fill="none" stroke="#a9a9a9"/><text x="48" y="11" text-anchor="end">3.5</text><text x="48" y="31" text-anchor="end">3</text></svg>
        </figure>
        <figure class="figure segments">
          <figcaption>Kundesegmenter</figcaption>
          <svg viewBox="0 0 340 60" width="340" height="60"><path d="M143 98V8a90 90 0 0 1 90 90z" fill="#4f81bd" stroke="#fff"/><path d="M143 98V8a90 90 0 0 0-90 90z" fill="#9bbb59" stroke="#fff"/></svg>
        </figure>
      </div>
      <div class="vscroll"><div class="vthumb"></div></div>
    </div>
    <div class="hscroll"><div class="hthumb"></div></div>
    <div class="tabs">
      <svg class="tabnav" viewBox="0 0 60 14"><g fill="#fbfbfa" stroke="#cbcac8"><path d="M1.500 1v12M11 1L4 7l7 6v-3L7 7l4-3zM16 4v6M23 4l-5 3 5 3zM31 4l-5 3 5 3zM33 4l5 3-5 3zM40 4l5 3-5 3zM47 4v6M49 1l7 6-7 6v-3l4-3-4-3zM58.500 1v12"/></g></svg>
      <button class="addtab" aria-label="Add sheet"><svg viewBox="0 0 14 16"><path d="M1 1h10v14H1z" fill="#fff" stroke="#d2d1cf" stroke-width=".8"/><circle cx="10.500" cy="7.500" r="2.500" fill="#2a6fb5"/><path d="M10.500 6v3M9 7.500h3" stroke="#fff" stroke-width=".8"/></svg></button>
      <button class="tab t1">Kunder</button><button class="tab t2">Salg og aktivitet</button><button class="tab t3 active">Dashboard</button>
    </div>
  </main>
  <aside class="sidebar">
    <button class="handle" aria-label="Hide sidebar"></button>
    <button class="side" aria-label="Sidebar settings"><svg viewBox="0 0 16 16"><path d="M3 4h10M3 8h10M3 12h10" stroke="#333" stroke-width="1.500"/></svg></button>
    <button class="side" aria-label="Properties"><svg><use href="#props"/></svg></button>
    <button class="side" aria-label="Styles"><svg><use href="#styles"/></svg></button>
    <button class="side" aria-label="Gallery"><svg><use href="#gallery"/></svg></button>
    <button class="side" aria-label="Navigator"><svg><use href="#nav"/></svg></button>
    <button class="side fx big" aria-label="Functions"><i>f</i><i class="sub">x</i></button>
  </aside>
</div>

<footer class="status">
  <span class="s-sheet"><svg viewBox="0 0 12 12"><path d="M1 1.500h10v9.500H1zM3.500 1.500h5v3h-5zM3 7h6v4H3z" fill="none" stroke="#999"/></svg>Sheet 3 of 3</span>
  <span class="s-gap"></span>
  <span class="s-style">PageStyle_Dashboard</span>
  <span class="s-lang">English (USA)</span>
  <span class="s-ins"></span>
  <span class="s-mode"><svg viewBox="0 0 20 12"><path d="M1 3h11v6H1z" fill="#fff" stroke="#3493d8"/><path d="M15 1h4M17 1v10M15 11h4" stroke="#333"/></svg></span>
  <span class="s-tiny"></span><span class="s-tiny"></span>
  <span class="s-sum">Average: ; Sum: 0</span>
  <span class="s-zoom"><button aria-label="Zoom out">−</button><input type="range" min="0" max="100" value="50" aria-label="Zoom"><button aria-label="Zoom in">+</button></span>
  <span class="s-pct">100%</span>
</footer>
</body>
</html>
```
FILE: styles.css
```css
* { box-sizing: border-box; }
body {
  margin: 0;
  height: 100vh;
  display: flex;
  flex-direction: column;
  overflow: hidden;
  background: #f6f5f4;
  color: #3a3a3a;
  font: 9px/12px "Noto Sans", sans-serif;
}
button, input { font: inherit; color: inherit; margin: 0; padding: 0; border: 0; background: none; }
.defs { display: none; }
.it { font: 9px "Noto Sans", sans-serif; fill: #444; }
.is { font: bold 7px "Noto Sans", sans-serif; }
.ib { font: 11px "Noto Sans", sans-serif; }
.blue { fill: #2f89d0; }
.violet { fill: #a33fb5; }

.menubar { display: flex; height: 17px; padding: 0 6px; gap: 11px; border-bottom: 1px solid #e9e8e6; }
.menubar .close { margin-left: auto; width: 10px; display: flex; align-items: center; }
.close svg { width: 8px; height: 8px; }

.toolbar { display: flex; height: 27px; padding: 1px 0 2px; }
.group { display: flex; align-items: center; padding: 0 3px 0 2px; border-right: 1px solid #e3e2e0; }
.group.last { border-right: 0; }
.w27 { width: 27px; }
.w34 { width: 34px; }
.w49 { width: 49px; }
.w64 { width: 64px; }
.w71 { width: 71px; }
.w78 { width: 78px; }
.w94 { width: 94px; }
.w100 { width: 100px; }
.w128 { width: 128px; }
.tb { flex: 22 1 0; height: 24px; display: flex; align-items: center; justify-content: center; border-radius: 3px; }
.tb svg { width: 16px; height: 16px; flex: none; }
.tb.drop { flex-grow: 29; gap: 4px; }
.tb.drop::after, .combo button::after, .expand::after {
  content: "";
  border: 2px solid transparent;
  border-top: 3px solid #222;
  border-bottom: 0;
}
.tb.dim::after { border-top-color: #bbb; }
.tb.on { background: #d3d0cc; }
.letter { font-size: 13px; color: #444; }
.letter.drop { gap: 7px; }
.letter u { text-decoration-color: #3493d8; text-decoration-thickness: 2px; }
.letter i { font-family: "Liberation Serif", serif; font-size: 14px; }

.boxes { width: 217px; gap: 5px; padding-left: 3px; }
.combo { display: flex; height: 24px; border: 1px solid #cfccc8; border-radius: 4px; background: #fff; overflow: hidden; }
.combo input { flex: 1; min-width: 0; padding-left: 5px; font-size: 9px; color: #222; }
.combo button { width: 24px; display: flex; align-items: center; justify-content: center; border-left: 1px solid #cfccc8; background: #f3f2f0; }
.combo button::after, .expand::after { border-width: 4px 4px 0; }
.combo button::after { border-top-color: #333; }
.fontname { width: 137px; }
.fontname input { font-style: italic; }
.fontsize { width: 69px; }
.cellname { width: 107px; }

.workspace { flex: 1; min-height: 0; display: flex; }
.doc { flex: 1; min-width: 0; display: flex; flex-direction: column; }
.formulabar { height: 28px; display: flex; align-items: center; padding: 0 4px 2px 3px; }
.fx { display: flex; align-items: center; justify-content: center; color: #2f89d0; font: 14px/16px "Liberation Serif", serif; width: 18px; }
.formulabar .fx { margin-left: 5px; }
.fx .sub { font-size: 11px; padding-top: 3px; }
.fx.big { font-size: 18px; }
.fx.big .sub { font-size: 14px; }
.tb.sum { flex: none; width: 24px; gap: 2px; }
.sum svg { width: 14px; height: 14px; }
.equals { width: 16px; font-size: 14px; font-weight: bold; color: #444; }
.formula { flex: 1; height: 18px; background: #fff; border: 1px solid #d6d5d3; }
.expand { width: 11px; display: flex; justify-content: center; }

.view { flex: 1; min-height: 0; display: flex; border-top: 1px solid #c4c3c1; }
.sheet { flex: 1; min-width: 0; position: relative; overflow: hidden; background: #fff; }
table { width: 100%; table-layout: fixed; border-collapse: separate; border-spacing: 0; font: 9px/7px Lato, sans-serif; color: #1a1a1a; }
.c-num { width: 22px; }
.c-a { width: 14px; }
.c-std { width: 86px; }
.c-alt { width: 85px; }
.c-wide { width: 334px; }
th, td { padding: 0 1px 0 0; white-space: nowrap; text-align: left; vertical-align: middle; overflow: hidden; }
th { font: 9px/7px "Noto Sans", sans-serif; text-align: center; padding: 0; background: #e2e1df; color: #444; border-right: 1px solid #bdbcba; border-bottom: 1px solid #bdbcba; }
th.sel { background: #3d87e3; color: #fff; font-weight: bold; }
.corner { background: #f6f5f4; }
.h7 > * { height: 7px; line-height: 5px; }
.h9 > * { height: 9px; }
.h10 > * { height: 10px; }
.h13 > * { height: 13px; }
.h14 > * { height: 14px; }
.h16 > * { height: 16px; }
.h17 > * { height: 17px; }
.h20 > * { height: 20px; }
.h22 > * { height: 22px; }
.h33 > * { height: 33px; }
.h36 > * { height: 36px; }
s { text-decoration: underline wavy #d9262c 1px; text-underline-offset: -1px; text-decoration-skip-ink: none; }
.cursor { border-right: 1px solid #3d87e3; border-bottom: 1px solid #3d87e3; background: linear-gradient(#3d87e3, #3d87e3) right bottom / 3px 3px no-repeat; }
td.title { font-size: 15px; font-weight: bold; color: #1e293b; line-height: 16px; overflow: visible; padding-bottom: 4px; }
td.subtitle { font-size: 8px; font-style: italic; color: #64748b; overflow: visible; padding-bottom: 2px; }
.kh { background: #1b263b; color: #fff; font-size: 7px; font-weight: bold; text-align: center; padding-bottom: 2px; }
.kv { background: #f0f8ff; border: 1px solid #d3dbe0; border-top: 0; color: #1e293b; font-size: 13px; line-height: 14px; font-weight: bold; text-align: center; }
.cut { font-weight: bold; font-size: 8px; position: relative; }
.cut::after { content: ""; position: absolute; right: 0; top: 8px; border: 3px solid transparent; border-left-color: #8e1b1b; border-right: 0; }
.rate { border: 1px solid #d5d5d5; color: #22a551; font-weight: bold; text-align: center; padding-bottom: 2px; }
.red { background: #c8102e; color: #fff; font-size: 9px; line-height: 10px; font-weight: bold; text-align: center; }
.dh { background: #334155; color: #fff; font-size: 8px; line-height: 8px; font-weight: bold; text-align: center; white-space: normal; border-right: 1px solid #d5d8dc; border-top: 1px solid #d5d8dc; }
.d { border-right: 1px solid #d5d8dc; border-bottom: 1px solid #d5d8dc; font-size: 8px; }
.n { font-weight: bold; border-left: 1px solid #d5d8dc; padding: 0; }
.odd .d { background: #f8fafc; }
.c { text-align: center; }
.r { text-align: right; }
.low { padding-top: 6px; }
.behind { padding-right: 11px; color: #475569; }

.figure { position: absolute; margin: 0; background: #fff; border: 1px solid #dcdcdc; top: 467px; height: 200px; }
.figure figcaption { margin-top: 12px; text-align: center; font: bold 15px/16px Lato, sans-serif; color: #000; }
.figure svg { display: block; margin-top: 8px; }
.figure text { font: 8px Lato, sans-serif; fill: #222; }
.pipeline { left: 36px; width: 390px; border-top-color: #dcc6ca; }
.segments { left: 799px; width: 341px; }

.vscroll { width: 9px; background: #cdcdcd; padding: 4px 2px; border-top: 1px solid #333; }
.vthumb { height: 40%; border-radius: 3px; background: #828282; }
.hscroll { height: 9px; background: #cdcdcd; padding: 1px 2px; margin-right: 9px; border-right: 2px solid #777; }
.hthumb { width: 522px; max-width: 46%; height: 7px; border-radius: 4px; background: #818181; }

.tabs { height: 17px; display: flex; align-items: center; padding-left: 6px; font-size: 8px; }
.tabnav { width: 60px; height: 14px; }
.addtab { width: 14px; height: 16px; margin: 0 12px 0 9px; }
.tab { height: 16px; text-align: center; }
.t1 { width: 27px; }
.t2 { width: 81px; margin-left: 9px; border-left: 1px solid #c9c8c6; border-right: 1px solid #c9c8c6; }
.t3 { width: 61px; }
.tab.active { background: #fff; font-weight: bold; border-bottom: 2px solid #8c8c8c; }

.sidebar { position: relative; width: 39px; border-left: 1px solid #cfcecc; display: flex; flex-direction: column; align-items: center; padding-top: 4px; gap: 9px; }
.side { width: 20px; height: 20px; display: flex; align-items: center; justify-content: center; }
.side svg { width: 16px; height: 16px; }
.handle { position: absolute; left: -1px; top: 268px; width: 5px; height: 50px; background: #929292; display: flex; align-items: center; }
.handle::after { content: ""; border: 2px solid transparent; border-left: 3px solid #fff; border-right: 0; }

.status { height: 17px; display: flex; border-top: 1px solid #cfcecc; font-size: 8px; line-height: 15px; }
.status span { display: flex; align-items: center; justify-content: center; border-right: 1px solid #e3e2e0; }
.status .s-sheet { width: 189px; justify-content: flex-start; padding-left: 6px; gap: 9px; }
.s-sheet svg { width: 12px; height: 12px; }
.s-gap { width: 166px; }
.status .s-style { width: 229px; justify-content: flex-start; padding-left: 7px; border: 0; }
.s-lang { width: 178px; }
.s-ins { width: 47px; }
.s-mode { width: 30px; }
.s-mode svg { width: 20px; height: 12px; }
.s-tiny { width: 20px; }
.s-sum { flex: 1; }
.s-zoom { width: 94px; gap: 3px; }
.s-zoom button { width: 9px; font-size: 13px; font-weight: bold; line-height: 12px; }
.s-zoom input { appearance: none; width: 64px; height: 10px; background: linear-gradient(#999, #999) center / 100% 1px no-repeat; }
.s-zoom input::-webkit-slider-thumb { appearance: none; width: 3px; height: 7px; border: 1px solid #555; background: #fff; }
.status .s-pct { width: 34px; border: 0; }
```
